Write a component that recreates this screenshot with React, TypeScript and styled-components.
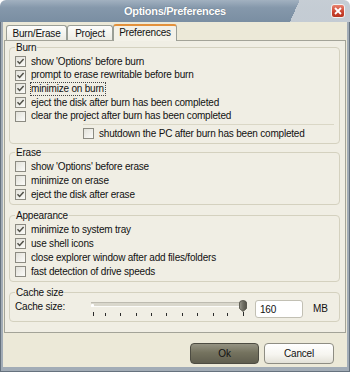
import React from "react";
import styled, { createGlobalStyle } from "styled-components";

const GlobalStyle = createGlobalStyle`
  html, body {
    margin: 0;
    padding: 0;
  }
  body {
    width: 350px;
    height: 372px;
    overflow: hidden;
    font-family: "Liberation Sans", Arial, sans-serif;
    font-size: 10px;
    letter-spacing: -0.2px;
    color: #111;
  }
`;

const Window = styled.div`
  width: 350px;
  height: 372px;
  display: flex;
  flex-direction: column;
`;

const TitleBar = styled.div`
  flex: none;
  height: 22px;
  display: grid;
  grid-template-columns: 1fr auto 1fr;
  align-items: center;
  border-radius: 6px 6px 0 0;
  background:
    linear-gradient(114deg, transparent 83.3%, rgba(200, 207, 214, 0.95) 83.3%),
    linear-gradient(#a2b1c0, #8598ab 35%, #7a8ea2);
`;

const Title = styled.div`
  grid-column: 2;
  color: #fff;
  font-size: 11px;
  font-weight: bold;
  letter-spacing: -0.3px;
  text-shadow: 0 0 1px #4f5f6e;
`;

const CloseButton = styled.div`
  grid-column: 3;
  justify-self: end;
  margin-right: 5px;
  width: 14px;
  height: 14px;
  box-sizing: border-box;
  border: 1px solid #f2f2f2;
  border-radius: 3px;
  background: linear-gradient(#e8826f, #c9412e 60%, #b8341f);
  display: flex;
  align-items: center;
  justify-content: center;
`;

const Frame = styled.div`
  flex: 1;
  display: flex;
  border: 1px solid #66727e;
  border-top: none;
  padding: 0 2px 4px;
  background: #a2acb6;
`;

const Body = styled.div`
  flex: 1;
  display: flex;
  flex-direction: column;
  background: #ece9d8;
  padding: 0 1px 3px;
`;

const TabRow = styled.div`
  position: relative;
  z-index: 1;
  display: flex;
  align-items: flex-end;
  height: 19px;
  margin-bottom: -1px;
  padding-left: 2px;
`;

const Tab = styled.div<{ $active?: boolean; $w: number }>`
  width: ${(p) => p.$w}px;
  height: ${(p) => (p.$active ? 17 : 15)}px;
  margin-bottom: ${(p) => (p.$active ? 0 : 1)}px;
  box-sizing: border-box;
  display: flex;
  justify-content: center;
  padding-top: ${(p) => (p.$active ? 0 : 1)}px;
  line-height: 13px;
  border: 1px solid #9a9e96;
  border-bottom: none;
  border-top: ${(p) => (p.$active ? "2px solid #e3913b" : "1px solid #9a9e96")};
  border-radius: 3px 3px 0 0;
  background: ${(p) => (p.$active ? "#f3f1e8" : "linear-gradient(#fdfdfb, #ecebe4)")};
`;

const Panel = styled.div`
  height: 293px;
  box-sizing: border-box;
  border: 1px solid #a3a398;
  background: #f0eee4;
  padding: 0 5px 0 4px;
`;

const Group = styled.fieldset<{ $gap?: number }>`
  margin: ${(p) => p.$gap ?? 0}px 0 0;
  padding: 1px 5px 2px;
  border: 1px solid #d4d1bf;
  border-radius: 4px;
  min-width: 0;
`;

const Legend = styled.legend`
  padding: 0 1px;
  line-height: 13px;
`;

const Row = styled.div<{ $h?: number }>`
  display: flex;
  align-items: center;
  gap: 5px;
  height: ${(p) => p.$h ?? 14}px;
`;

const Box = styled.span`
  flex: none;
  width: 11px;
  height: 11px;
  box-sizing: border-box;
  border: 1px solid #8c8b82;
  background: linear-gradient(135deg, #e2e1da, #fbfbf8);
  display: flex;
  align-items: center;
  justify-content: center;
`;

const Text = styled.span<{ $focused?: boolean }>`
  line-height: 12px;
  outline: ${(p) => (p.$focused ? "1px dotted #444" : "none")};
  outline-offset: 0;
  padding-right: ${(p) => (p.$focused ? 1 : 0)}px;
`;

const Indented = styled.div`
  margin: 1px 0 0 68px;
  border-top: 1px solid #dad7c6;
  padding-top: 2px;
`;

const CacheRow = styled.div`
  display: flex;
  align-items: center;
  height: 19px;
`;

const CacheLabel = styled.span`
  width: 75px;
  align-self: flex-start;
  margin-top: 1px;
`;

const SizeInput = styled.div`
  margin-left: 5px;
  width: 48px;
  height: 18px;
  box-sizing: border-box;
  border: 1px solid #c2c0b4;
  border-radius: 3px;
  background: #fff;
  padding-left: 4px;
  display: flex;
  align-items: center;
`;

const Unit = styled.span`
  margin-left: 10px;
  margin-top: -2px;
`;

const ButtonRow = styled.div`
  display: flex;
  justify-content: flex-end;
  gap: 5px;
  margin-top: 10px;
  padding-right: 12px;
`;

const Button = styled.div<{ $primary?: boolean; $w: number }>`
  width: ${(p) => p.$w}px;
  height: 21px;
  box-sizing: border-box;
  border-radius: 4px;
  display: flex;
  align-items: center;
  justify-content: center;
  border: 1px solid ${(p) => (p.$primary ? "#4d4c42" : "#8e8d83")};
  background: ${(p) =>
    p.$primary
      ? "linear-gradient(#959383, #75735f 45%, #605e4f)"
      : "linear-gradient(#ffffff, #f6f5f0 55%, #e3e1d7)"};
  color: #111;
`;

const Check = () => (
  <svg width="9" height="9" viewBox="0 0 9 9">
    <polyline points="1.5,4.2 3.6,6.4 7.6,2" fill="none" stroke="#505048" strokeWidth="1.5" />
  </svg>
);

const CheckRow = ({
  label,
  checked,
  focused,
  h,
}: {
  label: string;
  checked?: boolean;
  focused?: boolean;
  h?: number;
}) => (
  <Row $h={h}>
    <Box>{checked && <Check />}</Box>
    <Text $focused={focused}>{label}</Text>
  </Row>
);

const ticks = [3, 15, 30, 46, 61, 76, 92, 107, 123, 137, 153];

const Slider = () => (
  <svg width="160" height="19" viewBox="0 0 160 19">
    <defs>
      <linearGradient id="thumb" x1="0" y1="0" x2="1" y2="0">
        <stop offset="0" stopColor="#9a998e" />
        <stop offset="0.5" stopColor="#6f6e63" />
        <stop offset="1" stopColor="#55544a" />
      </linearGradient>
    </defs>
    <rect x="1" y="2" width="156" height="4" rx="1" fill="#d9d7cc" />
    <rect x="1" y="2" width="156" height="1" fill="#bdbbb0" />
    <rect x="1" y="6" width="156" height="1" fill="#fbfbf8" />
    <rect x="1" y="4" width="3" height="3" rx="1" fill="#fff" />
    {ticks.map((t, i) => (
      <rect
        key={t}
        x={t}
        y={i === 0 || i === ticks.length - 1 ? 12 : 13}
        width="1"
        height={i === 0 || i === ticks.length - 1 ? 4 : 3}
        fill="#2a2a2a"
      />
    ))}
    <path
      d="M149.5,3 Q149.5,0.5 153,0.5 Q156.5,0.5 156.5,3 L156.5,8.5 L153,11.5 L149.5,8.5 Z"
      fill="url(#thumb)"
      stroke="#4a4940"
      strokeWidth="0.8"
    />
  </svg>
);

export default function App() {
  return (
    <>
      <GlobalStyle />
      <Window>
        <TitleBar>
          <Title>Options/Preferences</Title>
          <CloseButton>
            <svg width="8" height="8" viewBox="0 0 8 8">
              <path d="M1,1 L7,7 M7,1 L1,7" stroke="#fff" strokeWidth="1.8" />
            </svg>
          </CloseButton>
        </TitleBar>
        <Frame>
          <Body>
            <TabRow>
              <Tab $w={61}>Burn/Erase</Tab>
              <Tab $w={46}>Project</Tab>
              <Tab $w={64} $active>
                Preferences
              </Tab>
            </TabRow>
            <Panel>
              <Group>
                <Legend>Burn</Legend>
                <CheckRow h={13.6} checked label="show 'Options' before burn" />
                <CheckRow h={13.6} checked label="prompt to erase rewritable before burn" />
                <CheckRow h={13.6} checked focused label="minimize on burn" />
                <CheckRow h={13.6} checked label="eject the disk after burn has been completed" />
                <CheckRow h={13.6} label="clear the project after burn has been completed" />
                <Indented>
                  <CheckRow label="shutdown the PC after burn has been completed" />
                </Indented>
              </Group>
              <Group $gap={2}>
                <Legend>Erase</Legend>
                <CheckRow label="show 'Options' before erase" />
                <CheckRow label="minimize on erase" />
                <CheckRow checked label="eject the disk after erase" />
              </Group>
              <Group $gap={4}>
                <Legend>Appearance</Legend>
                <CheckRow checked label="minimize to system tray" />
                <CheckRow checked label="use shell icons" />
                <CheckRow label="close explorer window after add files/folders" />
                <CheckRow label="fast detection of drive speeds" />
              </Group>
              <Group $gap={4}>
                <Legend>Cache size</Legend>
                <CacheRow>
                  <CacheLabel>Cache size:</CacheLabel>
                  <Slider />
                  <SizeInput>160</SizeInput>
                  <Unit>MB</Unit>
                </CacheRow>
              </Group>
            </Panel>
            <ButtonRow>
              <Button $primary $w={69}>
                Ok
              </Button>
              <Button $w={70}>Cancel</Button>
            </ButtonRow>
          </Body>
        </Frame>
      </Window>
    </>
  );
}
